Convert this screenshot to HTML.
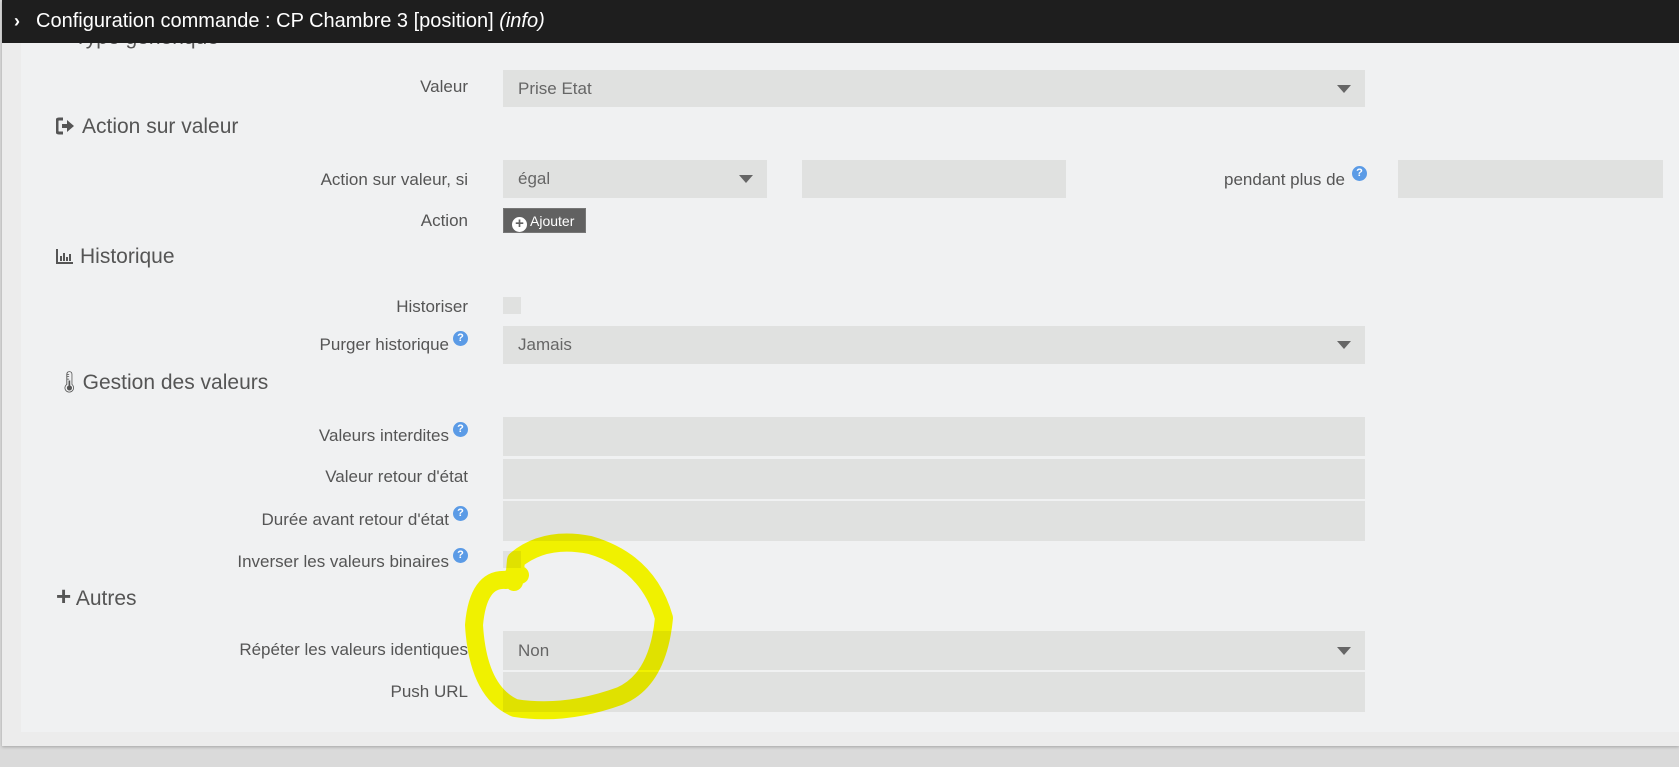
<!DOCTYPE html>
<html><head><meta charset="utf-8"><style>
*{margin:0;padding:0;box-sizing:border-box}
body{width:1679px;height:767px;background:#dadada;font-family:"Liberation Sans",sans-serif;position:relative;overflow:hidden}
.outer{position:absolute;left:2px;top:0;width:1677px;height:746px;background:#ececec;box-shadow:0 1px 3px rgba(0,0,0,.25)}
.inner{position:absolute;left:21px;top:0;width:1658px;height:732px;background:#f0f1f2}
.hdr{position:absolute;left:2px;top:0;width:1677px;height:43px;background:#1e1e1e;color:#fff;font-size:20px;line-height:43px;padding-left:34px;z-index:5}
.hdr .chev{position:absolute;left:12px;top:0;font-weight:bold;font-size:18px}
.lbl{position:absolute;right:1211px;font-size:17px;color:#555;white-space:nowrap}
.h{position:absolute;left:56px;font-size:21px;color:#555;white-space:nowrap}
.in{position:absolute;background:#e0e1e0}
.sel:after{content:"";position:absolute;right:14px;top:50%;margin-top:-4px;border-left:7px solid transparent;border-right:7px solid transparent;border-top:8px solid #666}
.val{position:absolute;left:15px;top:50%;transform:translateY(-50%);font-size:17px;color:#666}
.q{display:inline-block;width:15px;height:15px;border-radius:50%;background:#5b9be6;color:#fff;font-size:11px;font-weight:bold;text-align:center;line-height:15px;vertical-align:top;margin-left:4px;position:relative;top:-4px}
.btn{position:absolute;left:503px;top:208px;width:83px;height:25px;background:#616161;color:#fff;font-size:14px;line-height:24px;padding-left:8px;border:1px solid #777}
.btn b{display:inline-block;width:15px;height:15px;border-radius:50%;background:#fff;color:#616161;font-size:15px;line-height:14px;text-align:center;vertical-align:-2px;margin-right:3px}
</style></head><body>
<div class="outer"></div>
<div class="inner"></div>
<div class="hdr"><span class="chev">&#x203A;</span>Configuration commande : CP Chambre 3 [position] <i>(info)</i></div>
<div class="h" style="top:26px">&#9632; Type générique</div>

<div class="lbl" style="top:77px">Valeur</div>
<div class="in sel" style="left:503px;top:70px;width:862px;height:37px"><span class="val">Prise Etat</span></div>

<div class="h" style="top:115px"><svg width="20" height="18" style="vertical-align:-2px;margin-right:6px"><path d="M7 2H3Q1 2 1 4V14Q1 16 3 16H7" stroke="#555" stroke-width="3" fill="none"/><path d="M6 7H11V3L18 9L11 15V11H6Z" fill="#555"/></svg>Action sur valeur</div>
<div class="lbl" style="top:170px">Action sur valeur, si</div>
<div class="in sel" style="left:503px;top:160px;width:264px;height:38px"><span class="val">égal</span></div>
<div class="in" style="left:802px;top:160px;width:264px;height:38px"></div>
<div class="lbl" style="top:170px;right:334px">pendant plus de</div>
<span class="q" style="position:absolute;left:1348px;top:166px">?</span>
<div class="in" style="left:1398px;top:160px;width:265px;height:38px"></div>
<div class="lbl" style="top:211px">Action</div>
<div class="btn"><b>+</b>Ajouter</div>

<div class="h" style="top:245px"><svg width="18" height="16" style="vertical-align:-1px;margin-right:6px"><path d="M1 1V15H17M5 13V8M8 13V5M11 13V9M14 13V6" stroke="#555" stroke-width="2" fill="none"/></svg>Historique</div>
<div class="lbl" style="top:297px">Historiser</div>
<div class="in" style="left:503px;top:297px;width:18px;height:17px"></div>
<div class="lbl" style="top:335px">Purger historique<span class="q">?</span></div>
<div class="in sel" style="left:503px;top:326px;width:862px;height:38px"><span class="val">Jamais</span></div>

<div class="h" style="top:371px">&#x1F321;Gestion des valeurs</div>
<div class="lbl" style="top:426px">Valeurs interdites<span class="q">?</span></div>
<div class="in" style="left:503px;top:417px;width:862px;height:39px"></div>
<div class="lbl" style="top:467px">Valeur retour d'état</div>
<div class="in" style="left:503px;top:459px;width:862px;height:40px"></div>
<div class="lbl" style="top:510px">Durée avant retour d'état<span class="q">?</span></div>
<div class="in" style="left:503px;top:501px;width:862px;height:40px"></div>
<div class="lbl" style="top:552px">Inverser les valeurs binaires<span class="q">?</span></div>
<div class="in" style="left:503px;top:551px;width:18px;height:17px"></div>

<div class="h" style="top:586px"><b style="font-size:26px;line-height:20px">+</b> Autres</div>
<div class="lbl" style="top:640px">Répéter les valeurs identiques</div>
<div class="in sel" style="left:503px;top:631px;width:862px;height:39px"><span class="val">Non</span></div>
<div class="lbl" style="top:682px">Push URL</div>
<div class="in" style="left:503px;top:672px;width:862px;height:40px"></div>

<svg width="1679" height="767" style="position:absolute;left:0;top:0;mix-blend-mode:multiply;z-index:3">
<path d="M514,582 L516,560 Q545,536 590,545 Q648,562 664,618 Q658,680 620,696 Q565,716 515,708 Q478,692 474,625 Q478,578 506,580 L520,575" stroke="#ffff00" stroke-width="18" fill="none" stroke-linecap="round" stroke-linejoin="round"/>
</svg>
</body></html>
